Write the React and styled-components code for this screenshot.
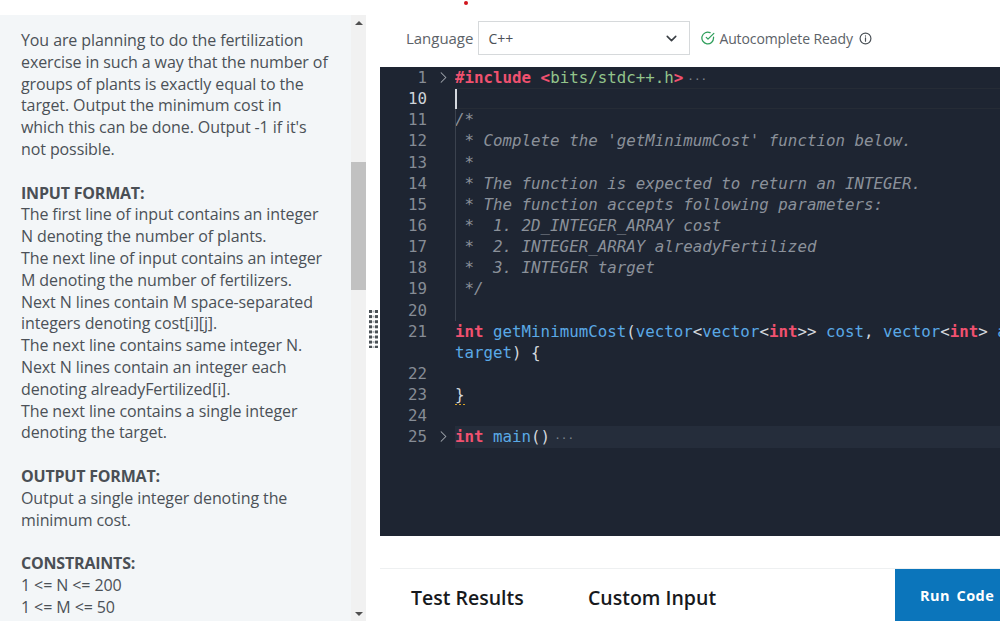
import React from 'react'
import styled, { createGlobalStyle } from 'styled-components'
import { ChevronDown, ChevronRight } from 'lucide-react'

const GlobalStyle = createGlobalStyle`
  html, body {
    margin: 0;
    padding: 0;
    height: 100%;
    overflow: hidden;
    background: #ffffff;
  }
`

const Page = styled.div`
  position: relative;
  display: flex;
  width: 1000px;
  height: 621px;
  padding-top: 15px;
  box-sizing: border-box;
  overflow: hidden;
  font-family: 'Open Sans', sans-serif;
`
const RedDot = styled.span`
  position: absolute;
  top: 1px;
  left: 464px;
  width: 4px;
  height: 4px;
  border-radius: 50%;
  background: #d0141c;
`
const LeftPanel = styled.div`
  display: flex;
  flex: 0 0 366px;
  background: #f3f6f8;
  overflow: hidden;
`
const Statement = styled.div`
  flex: 1;
  box-sizing: border-box;
  padding: 15px 21px 0 21px;
  font-size: 16px;
  line-height: 21.8px;
  color: #4b5157;
  letter-spacing: -0.1px;
`
const Paragraph = styled.p`
  margin: 0 0 21.8px;
`
const Heading = styled.strong`
  display: block;
  font-weight: 700;
  color: #4a4f55;
  letter-spacing: -0.2px;
`
const Scrollbar = styled.div`
  display: flex;
  flex-direction: column;
  flex: 0 0 15px;
  background: #f1f1f1;
`
const ScrollArrow = styled.div`
  flex: 0 0 15px;
  display: flex;
  align-items: center;
  justify-content: center;
  &::before {
    content: '';
    border-left: 4px solid transparent;
    border-right: 4px solid transparent;
    ${p => (p.$down ? 'border-top: 4px solid #505050;' : 'border-bottom: 4px solid #505050;')}
  }
`
const ScrollTrack = styled.div`
  flex: 1;
  padding-top: 132px;
`
const ScrollThumb = styled.div`
  height: 128px;
  background: #c1c1c1;
`
const Divider = styled.div`
  flex: 0 0 14px;
  display: flex;
  align-items: center;
  justify-content: center;
  padding-top: 22px;
  box-sizing: border-box;
`
const Handle = styled.svg`
  display: block;
`
const RightPanel = styled.div`
  display: flex;
  flex-direction: column;
  flex: 1;
  min-width: 0;
  background: #ffffff;
`
const Toolbar = styled.div`
  display: flex;
  align-items: center;
  flex: 0 0 52px;
  box-sizing: border-box;
  padding: 0 0 6px 26px;
  font-size: 15px;
  color: #5c6268;
`
const LangLabel = styled.span`
  margin-right: 5px;
  letter-spacing: -0.03px;
`
const Select = styled.div`
  display: flex;
  align-items: center;
  justify-content: space-between;
  width: 212px;
  height: 34px;
  box-sizing: border-box;
  padding: 0 9px;
  border: 1px solid #d6d9db;
  font-size: 14px;
  color: #4b5157;
`
const Status = styled.div`
  display: flex;
  align-items: center;
  margin-left: 11px;
`
const StatusText = styled.span`
  margin: 0 6px 0 4px;
  font-size: 14px;
  letter-spacing: -0.1px;
`
const Editor = styled.div`
  flex: 0 0 469px;
  box-sizing: border-box;
  background: #1e2532;
  overflow: hidden;
  font-family: 'DejaVu Sans Mono', monospace;
  font-size: 15.8px;
  line-height: 21.15px;
  color: #d4d8de;
`
const Row = styled.div`
  display: flex;
  height: 21.15px;
  white-space: pre;
`
const LineNo = styled.span`
  flex: 0 0 47px;
  text-align: right;
  color: ${p => (p.$active ? '#cfd3d9' : '#868c95')};
`
const Fold = styled.span`
  display: flex;
  align-items: center;
  justify-content: center;
  flex: 0 0 28px;
  box-sizing: border-box;
  padding-left: 4px;
  color: #a4a9b0;
`
const Code = styled.span`
  position: relative;
  flex: 1;
  min-width: 0;
  overflow: hidden;
  background: ${p => (p.$shade ? '#252d3b' : 'transparent')};
  box-shadow: ${p => (p.$current ? 'inset 0 1px 0 #262c36, inset 0 -1px 0 #262c36' : 'none')};
`
const Caret = styled.span`
  position: absolute;
  top: 1px;
  left: 0;
  width: 2px;
  height: 20px;
  background: #d4d8de;
`
const Guide = styled.span`
  position: absolute;
  top: 0;
  bottom: 0;
  left: 0;
  width: 1px;
  background: #3b424e;
`
const Keyword = styled.span`
  color: #f0516f;
  font-weight: 700;
`
const Str = styled.span`
  color: #93c48b;
`
const Fn = styled.span`
  color: #5aa9e6;
`
const Comment = styled.span`
  color: #8b919a;
  font-style: italic;
`
const Dots = styled.span`
  color: #7e848d;
  font-size: 11px;
  margin-left: 4px;
`
const Squiggle = styled.span`
  border-bottom: 2px dotted #d9a326;
`
const Gap = styled.div`
  flex: 0 0 32px;
  border-bottom: 1px solid #eef0f1;
`
const BottomBar = styled.div`
  display: flex;
  align-items: center;
  flex: 1;
  padding-left: 31px;
`
const Tab = styled.span`
  width: 177px;
  font-size: 19.5px;
  font-weight: 600;
  color: #17191c;
  padding-top: 5px;
`
const RunButton = styled.button`
  align-self: stretch;
  margin-left: auto;
  width: 105px;
  border: 0;
  padding: 0 0 0 25px;
  text-align: left;
  white-space: nowrap;
  background: #0b75bb;
  color: #ffffff;
  font-family: 'Open Sans', sans-serif;
  font-size: 14.5px;
  font-weight: 700;
  letter-spacing: 0.5px;
  word-spacing: 2px;
`

const comments = [
  [11, '/*'],
  [12, " * Complete the 'getMinimumCost' function below."],
  [13, ' *'],
  [14, ' * The function is expected to return an INTEGER.'],
  [15, ' * The function accepts following parameters:'],
  [16, ' *  1. 2D_INTEGER_ARRAY cost'],
  [17, ' *  2. INTEGER_ARRAY alreadyFertilized'],
  [18, ' *  3. INTEGER target'],
  [19, ' */'],
]

const FoldArrow = () => (
  <Fold>
    <ChevronRight size={19} strokeWidth={1.3} />
  </Fold>
)

export default function App() {
  return (
    <Page>
      <GlobalStyle />
      <RedDot />
      <LeftPanel>
        <Statement>
          <Paragraph>
            You are planning to do the fertilization exercise in such a way that the number of groups of plants is
            exactly equal to the target. Output the minimum cost in
            <br />
            which this can be done. Output -1 if it's not possible.
          </Paragraph>
          <Paragraph>
            <Heading>INPUT FORMAT:</Heading>
            The first line of input contains an integer N denoting the number of plants.
            <br />
            The next line of input contains an integer M denoting the number of fertilizers.
            <br />
            Next N lines contain M space-separated integers denoting cost[i][j].
            <br />
            The next line contains same integer N.
            <br />
            Next N lines contain an integer each denoting alreadyFertilized[i].
            <br />
            The next line contains a single integer denoting the target.
          </Paragraph>
          <Paragraph>
            <Heading>OUTPUT FORMAT:</Heading>
            Output a single integer denoting the minimum cost.
          </Paragraph>
          <Paragraph>
            <Heading>CONSTRAINTS:</Heading>
            1 {'<'}= N {'<'}= 200
            <br />1 {'<'}= M {'<'}= 50
          </Paragraph>
        </Statement>
        <Scrollbar>
          <ScrollArrow />
          <ScrollTrack>
            <ScrollThumb />
          </ScrollTrack>
          <ScrollArrow $down />
        </Scrollbar>
      </LeftPanel>
      <Divider>
        <Handle width="9" height="38" viewBox="0 0 9 38">
          {Array.from({ length: 8 }).flatMap((_, i) =>
            [0, 6].map(x => <rect key={`${i}-${x}`} x={x} y={i * 5.1} width="3" height="3" fill="#4a5055" />),
          )}
          {Array.from({ length: 8 }).map((_, i) => (
            <rect key={i} x="3.5" y={i * 5.1 + 0.5} width="2" height="2" fill="#b4b8bb" />
          ))}
        </Handle>
      </Divider>
      <RightPanel>
        <Toolbar>
          <LangLabel>Language</LangLabel>
          <Select>
            C++
            <ChevronDown size={17} strokeWidth={2.2} color="#3a3f44" />
          </Select>
          <Status>
            <svg width="14" height="14" viewBox="0 0 24 24" fill="none" stroke="#2f9e5b" strokeWidth="2.2" strokeLinecap="round" strokeLinejoin="round">
              <path d="M21.5 10.5V12a10 10 0 1 1-5.9-9.1" />
              <path d="M22 4 12 14l-3-3" />
            </svg>
            <StatusText>Autocomplete Ready</StatusText>
            <svg width="13" height="13" viewBox="0 0 24 24" fill="none" stroke="#4b5157" strokeWidth="2.2" strokeLinecap="round">
              <circle cx="12" cy="12" r="10" />
              <path d="M12 11v6M12 7v.5" />
            </svg>
          </Status>
        </Toolbar>
        <Editor>
          <Row>
            <LineNo>1</LineNo>
            <FoldArrow />
            <Code>
              <Keyword>#include</Keyword> <Keyword>{'<'}</Keyword><Str>bits/stdc++.h</Str><Keyword>{'>'}</Keyword>
              <Dots>···</Dots>
            </Code>
          </Row>
          <Row>
            <LineNo $active>10</LineNo>
            <Fold />
            <Code $current>
              <Caret />
            </Code>
          </Row>
          {comments.map(([n, text]) => (
            <Row key={n}>
              <LineNo>{n}</LineNo>
              <Fold />
              <Code>
                <Guide />
                <Comment>{text}</Comment>
              </Code>
            </Row>
          ))}
          <Row>
            <LineNo>20</LineNo>
            <Fold />
            <Code>
              <Guide />
            </Code>
          </Row>
          <Row>
            <LineNo>21</LineNo>
            <Fold />
            <Code>
              <Keyword>int</Keyword> <Fn>getMinimumCost</Fn>(<Fn>vector</Fn>{'<'}<Fn>vector</Fn>{'<'}<Keyword>int</Keyword>{'>> '}<Fn>cost</Fn>, <Fn>vector</Fn>{'<'}<Keyword>int</Keyword>{'> '}<Fn>alreadyFertilized</Fn>
            </Code>
          </Row>
          <Row>
            <LineNo />
            <Fold />
            <Code>
              <Fn>target</Fn>) {'{'}
            </Code>
          </Row>
          <Row>
            <LineNo>22</LineNo>
            <Fold />
            <Code />
          </Row>
          <Row>
            <LineNo>23</LineNo>
            <Fold />
            <Code>
              <Squiggle>{'}'}</Squiggle>
            </Code>
          </Row>
          <Row>
            <LineNo>24</LineNo>
            <Fold />
            <Code />
          </Row>
          <Row>
            <LineNo>25</LineNo>
            <FoldArrow />
            <Code $shade>
              <Keyword>int</Keyword> <Fn>main</Fn>()
              <Dots>···</Dots>
            </Code>
          </Row>
        </Editor>
        <Gap />
        <BottomBar>
          <Tab>Test Results</Tab>
          <Tab>Custom Input</Tab>
          <RunButton>Run Code</RunButton>
        </BottomBar>
      </RightPanel>
    </Page>
  )
}
